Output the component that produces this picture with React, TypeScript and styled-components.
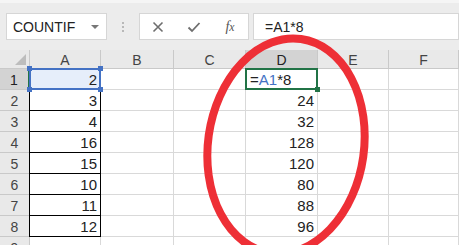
import React from "react";
import styled, { createGlobalStyle, css } from "styled-components";

const Global = createGlobalStyle`
  html, body { margin: 0; padding: 0; background: #fff; }
  body { font-family: "Liberation Sans", Arial, sans-serif; overflow: hidden; }
`;

const Page = styled.div`
  position: relative;
  width: 459px;
  height: 245px;
  overflow: hidden;
  background: #fff;
`;

const Toolbar = styled.div`
  height: 50px;
  box-sizing: border-box;
  padding: 13px 0 0 6px;
  background: #ececec;
  display: flex;
  align-items: flex-start;
  border-top: 3px solid #f5f5f5;
  padding-top: 10px;
`;

const Box = styled.div<{ $w?: number; $grow?: boolean }>`
  height: 27px;
  box-sizing: border-box;
  background: #fff;
  border: 1px solid #d6d6d6;
  display: flex;
  align-items: center;
  ${(p) => (p.$w ? css`width: ${p.$w}px;` : "")}
  ${(p) => (p.$grow ? css`flex: 1;` : "")}
`;

const NameText = styled.span`
  font-size: 14px;
  color: #222;
  padding-left: 6px;
  flex: 1;
`;

const Caret = styled.span`
  width: 0;
  height: 0;
  border-left: 4px solid transparent;
  border-right: 4px solid transparent;
  border-top: 4px solid #777;
  margin-right: 7px;
`;

const Grip = styled.div`
  width: 32px;
  height: 27px;
  display: flex;
  flex-direction: column;
  align-items: center;
  justify-content: center;
  gap: 2px;
  i {
    display: block;
    width: 2px;
    height: 2px;
    background: #b8b8b8;
  }
`;

const IconSlot = styled.span`
  width: 36px;
  display: flex;
  align-items: center;
  justify-content: center;
  color: #707070;
`;

const Fx = styled.span`
  font-family: "Liberation Serif", serif;
  font-style: italic;
  font-size: 14px;
  color: #555;
`;

const FormulaText = styled.span`
  font-size: 14px;
  color: #222;
  padding-left: 11px;
`;

const Gap = styled.div<{ $w: number }>`
  width: ${(p) => p.$w}px;
`;

const Sheet = styled.div`
  display: grid;
  grid-template-columns: 30px 71px 73px 72px 72px 71px 70px;
  grid-template-rows: 19px;
  grid-auto-rows: 21px;
`;

const Head = styled.div<{ $sel?: boolean; $row?: boolean }>`
  box-sizing: border-box;
  background: ${(p) => (p.$sel ? "#d3d3d3" : "#e9e9e9")};
  border-right: 1px solid #c9c9c9;
  border-bottom: 1px solid #c9c9c9;
  display: flex;
  align-items: center;
  justify-content: center;
  font-size: 14px;
  color: ${(p) => (p.$sel ? "#222" : "#444")};
  padding-top: 1px;
  ${(p) =>
    p.$row &&
    p.$sel &&
    css`
      border-right: 2px solid #217346;
    `}
`;

const Corner = styled.div`
  box-sizing: border-box;
  background: #e9e9e9;
  border-right: 1px solid #c9c9c9;
  border-bottom: 1px solid #c9c9c9;
  position: relative;
  &::after {
    content: "";
    position: absolute;
    right: 3px;
    bottom: 3px;
    width: 0;
    height: 0;
    border-left: 11px solid transparent;
    border-bottom: 11px solid #bdbdbd;
  }
`;

const Cell = styled.div<{ $boxed?: boolean; $left?: boolean }>`
  position: relative;
  box-sizing: border-box;
  border-right: 1px solid #d9d9d9;
  border-bottom: 1px solid #d9d9d9;
  display: flex;
  align-items: flex-end;
  justify-content: ${(p) => (p.$left ? "flex-start" : "flex-end")};
  padding: 0 3px 1px 4px;
  font-size: 15px;
  color: #222;
  ${(p) =>
    p.$boxed &&
    css`
      border-right-color: #000;
      border-bottom-color: #000;
      box-shadow: -1px 0 0 #000;
    `}
`;

const RefCell = styled(Cell)`
  background: #e6eefa;
  &::after {
    content: "";
    position: absolute;
    left: -1px;
    top: -1px;
    right: -1px;
    bottom: -1px;
    border: 2px solid #4472c4;
  }
`;

const Handle = styled.span<{ $pos: "tl" | "tr" | "bl" | "br"; $color: string }>`
  position: absolute;
  width: 5px;
  height: 5px;
  background: ${(p) => p.$color};
  z-index: 2;
  ${(p) => (p.$pos[0] === "t" ? "top: -3px;" : "bottom: -3px;")}
  ${(p) => (p.$pos[1] === "l" ? "left: -3px;" : "right: -3px;")}
`;

const ActiveCell = styled(Cell)`
  &::after {
    content: "";
    position: absolute;
    left: -1px;
    top: -1px;
    right: -1px;
    bottom: -1px;
    border: 2px solid #217346;
  }
`;

const Blue = styled.span`
  color: #4472c4;
`;

const Overlay = styled.svg`
  position: absolute;
  left: 0;
  top: 0;
  pointer-events: none;
`;

const cols = ["A", "B", "C", "D", "E", "F"];
const aVals = [2, 3, 4, 16, 15, 10, 11, 12];
const dVals = [null, 24, 32, 128, 120, 80, 88, 96];

export default function App() {
  return (
    <Page>
      <Global />
      <Toolbar>
        <Box $w={101}>
          <NameText>COUNTIF</NameText>
          <Caret />
        </Box>
        <Grip>
          <i />
          <i />
          <i />
        </Grip>
        <Box $w={110}>
          <IconSlot>
            <svg width="12" height="12" viewBox="0 0 12 12">
              <path d="M1.5 1.5 L10.5 10.5 M10.5 1.5 L1.5 10.5" stroke="#6e6e6e" strokeWidth="1.6" fill="none" />
            </svg>
          </IconSlot>
          <IconSlot>
            <svg width="14" height="12" viewBox="0 0 14 12">
              <path d="M1.5 6.5 L5 10 L12.5 2" stroke="#6e6e6e" strokeWidth="1.8" fill="none" />
            </svg>
          </IconSlot>
          <IconSlot>
            <Fx>f<small>x</small></Fx>
          </IconSlot>
        </Box>
        <Gap $w={4} />
        <Box $grow>
          <FormulaText>=A1*8</FormulaText>
        </Box>
      </Toolbar>
      <Sheet>
        <Corner />
        {cols.map((c) => (
          <Head key={c} $sel={c === "D"}>
            {c}
          </Head>
        ))}
        {Array.from({ length: 9 }).map((_, r) => (
          <React.Fragment key={r}>
            <Head $row $sel={r === 0}>
              {r + 1}
            </Head>
            {r === 0 ? (
              <RefCell $boxed>
                2
                <Handle $pos="tl" $color="#4472c4" />
                <Handle $pos="tr" $color="#4472c4" />
                <Handle $pos="bl" $color="#4472c4" />
                <Handle $pos="br" $color="#4472c4" />
              </RefCell>
            ) : (
              <Cell $boxed={r < 8}>{r < 8 ? aVals[r] : ""}</Cell>
            )}
            <Cell />
            <Cell />
            {r === 0 ? (
              <ActiveCell $left>
                =<Blue>A1</Blue>*8
                <Handle $pos="br" $color="#217346" />
              </ActiveCell>
            ) : (
              <Cell>{r < 8 ? dVals[r] : ""}</Cell>
            )}
            <Cell />
            <Cell />
          </React.Fragment>
        ))}
      </Sheet>
      <Overlay width="459" height="245" viewBox="0 0 459 245">
        <ellipse
          cx="286"
          cy="146"
          rx="78"
          ry="108"
          transform="rotate(8 286 146)"
          fill="none"
          stroke="#ee2f36"
          strokeWidth="8"
        />
      </Overlay>
    </Page>
  );
}
